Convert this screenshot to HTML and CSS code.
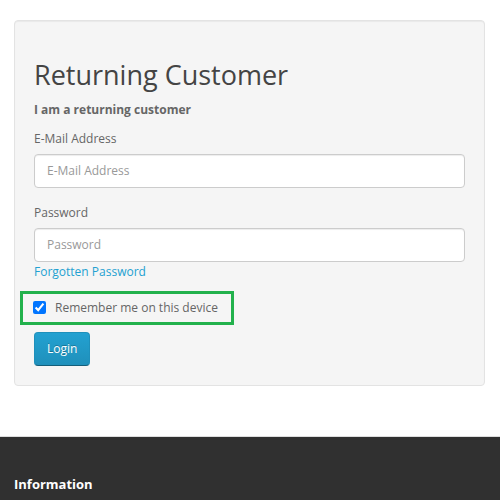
FILE: index.html
```html
<!DOCTYPE html>
<html lang="en">
<head>
<meta charset="utf-8">
<title>Account Login</title>
<link rel="stylesheet" href="styles.css">
</head>
<body>
<div class="container">
  <div class="well">
    <h2 class="title">Returning Customer</h2>
    <p class="lead"><strong>I am a returning customer</strong></p>
    <form class="login-form">
      <div class="form-group">
        <label class="control-label" for="input-email">E-Mail Address</label>
        <input class="form-control" type="text" id="input-email" placeholder="E-Mail Address">
      </div>
      <div class="form-group form-group-last">
        <label class="control-label" for="input-password">Password</label>
        <input class="form-control" type="password" id="input-password" placeholder="Password">
        <a class="forgot" href="#">Forgotten Password</a>
      </div>
      <div class="remember">
        <input class="remember-box" type="checkbox" id="remember" checked>
        <label class="remember-label" for="remember">Remember me on this device</label>
      </div>
      <button class="btn-primary" type="button">Login</button>
    </form>
  </div>
</div>
<footer class="footer">
  <div class="footer-inner">
    <h5 class="footer-title">Information</h5>
  </div>
</footer>
</body>
</html>
```

FILE: styles.css
```css
html, body {
  margin: 0;
  padding: 0;
  background: #fff;
}
body {
  font-family: "Open Sans", "Liberation Sans", sans-serif;
  font-size: 12px;
  line-height: 20px;
  color: #666;
}
.container {
  padding: 20px 15px 0 14px;
}
.well {
  background: #f5f5f5;
  border: 1px solid #e3e3e3;
  border-radius: 4px;
  box-shadow: inset 0 1px 1px rgba(0, 0, 0, 0.05);
  padding: 19px;
}
.title {
  margin: 20px 0 10px;
  font-size: 27px;
  line-height: 1.1;
  font-weight: normal;
  color: #444;
}
.lead {
  margin: 0 0 9px;
}
.lead strong {
  font-weight: bold;
}
.form-group {
  margin-bottom: 15px;
}
.form-group-last {
  margin-bottom: 0;
}
.control-label {
  display: block;
  margin-bottom: 5px;
  font-weight: normal;
}
.form-control {
  display: block;
  box-sizing: border-box;
  width: 100%;
  height: 34px;
  padding: 6px 12px;
  margin: 0;
  font-family: inherit;
  font-size: 12px;
  color: #555;
  background: #fff;
  border: 1px solid #ccc;
  border-radius: 4px;
  box-shadow: inset 0 1px 1px rgba(0, 0, 0, 0.075);
}
.form-control::placeholder {
  color: #999;
}
.forgot {
  display: block;
  color: #23a1d1;
  text-decoration: none;
}
.remember {
  display: flex;
  align-items: center;
  gap: 9px;
  width: fit-content;
  border: 3px solid #22b14c;
  margin: 9px 0 7px -14px;
  padding: 4px 13px 4px 10px;
}
.remember-box {
  width: 13px;
  height: 13px;
  margin: 0;
  accent-color: #0075ff;
}
.remember-label {
  line-height: 20px;
}
.btn-primary {
  display: block;
  height: 34px;
  padding: 6px 12px;
  font-family: inherit;
  font-size: 12px;
  line-height: 20px;
  color: #fff;
  text-shadow: 0 -1px 0 rgba(0, 0, 0, 0.25);
  background: linear-gradient(#23a1d1, #1f90bb);
  border: 1px solid #1f90bb;
  border-bottom-color: #145e7a;
  border-radius: 4px;
  cursor: pointer;
}
.footer {
  margin-top: 50px;
  background: #303030;
  border-top: 1px solid #ddd;
  padding: 30px 0 10px 14px;
}
.footer-title {
  margin: 10px 0 0;
  font-size: 13px;
  line-height: 1.1;
  font-weight: bold;
  color: #fff;
}
```
